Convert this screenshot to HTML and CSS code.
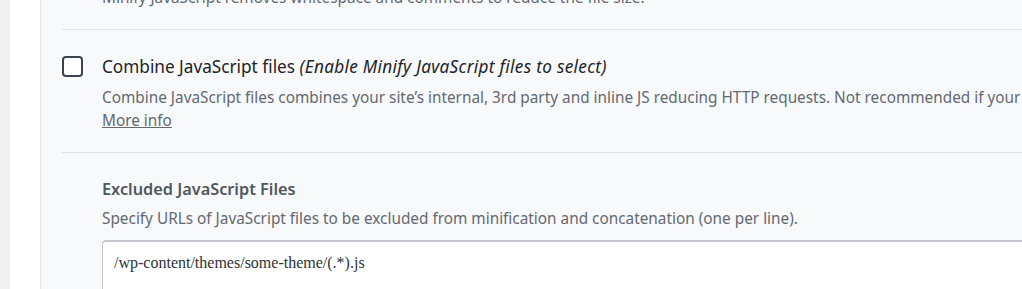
FILE: index.html
```html
<!DOCTYPE html>
<html>
<head>
<meta charset="utf-8">
<link rel="stylesheet" href="styles.css">
</head>
<body>
<div class="page">
  <div class="strip"></div>
  <div class="gutter"></div>
  <div class="panel">
    <div class="prev">
      <p class="desc">Minify JavaScript removes whitespace and comments to reduce the file size.</p>
    </div>
    <div class="option">
      <span class="checkbox"></span>
      <div class="option-body">
        <div class="title">Combine JavaScript files <em>(Enable Minify JavaScript files to select)</em></div>
        <p class="desc"><span class="line">Combine JavaScript files combines your site’s internal, 3rd party and inline JS reducing HTTP requests. Not recommended if your site uses a lot of third-party scripts.</span><br><a href="#" class="more">More info</a></p>
      </div>
    </div>
    <div class="excluded">
      <div class="heading">Excluded JavaScript Files</div>
      <p class="desc">Specify URLs of JavaScript files to be excluded from minification and concatenation (one per line).</p>
      <div class="textarea">/wp-content/themes/some-theme/(.*).js</div>
    </div>
  </div>
</div>
</body>
</html>
```
FILE: styles.css
```css
html, body {
  margin: 0;
  padding: 0;
  overflow: hidden;
  background: #ffffff;
}
.page {
  display: flex;
  width: 1300px;
  height: 289px;
  font-family: "Noto Sans", sans-serif;
}
.strip {
  width: 10px;
  flex: none;
  background: #f0f0f0;
}
.gutter {
  width: 30px;
  flex: none;
  background: #ffffff;
}
.panel {
  flex: 1;
  background: #f8f9fb;
  border-left: 1px solid #e4e6ea;
  padding-left: 21px;
}
.desc {
  margin: 0;
  font-size: 15.35px;
  line-height: 23px;
  color: #646970;
  white-space: nowrap;
}
.prev {
  margin-top: -14px;
  padding-left: 40px;
  padding-bottom: 20px;
  border-bottom: 1px solid #e2e4e7;
}
.option {
  display: flex;
  gap: 19px;
  padding-top: 26px;
  padding-bottom: 20px;
  border-bottom: 1px solid #e2e4e7;
}
.checkbox {
  width: 17px;
  height: 17px;
  border: 2px solid #3c434a;
  border-radius: 4px;
  flex: none;
  background: #ffffff;
}
.title {
  font-size: 17.2px;
  line-height: 22px;
  color: #1d2327;
  margin-bottom: 8px;
}
.title em {
  font-style: italic;
  letter-spacing: 0.3px;
}
.more {
  color: #646970;
  text-decoration: underline;
}
.excluded {
  padding-left: 40px;
  padding-top: 24px;
}
.heading {
  font-size: 16.3px;
  line-height: 24px;
  font-weight: 600;
  color: #50575e;
  margin-bottom: 6px;
}
.excluded .desc {
  margin-bottom: 10px;
}
.textarea {
  background: #ffffff;
  border-top: 2px solid #c3c6cd;
  border-left: 1px solid #c3c6cd;
  border-top-left-radius: 4px;
  height: 60px;
  padding: 11px 0 0 11px;
  font-family: "Liberation Serif", serif;
  font-size: 16px;
  line-height: 20px;
  color: #2c3338;
}
```
